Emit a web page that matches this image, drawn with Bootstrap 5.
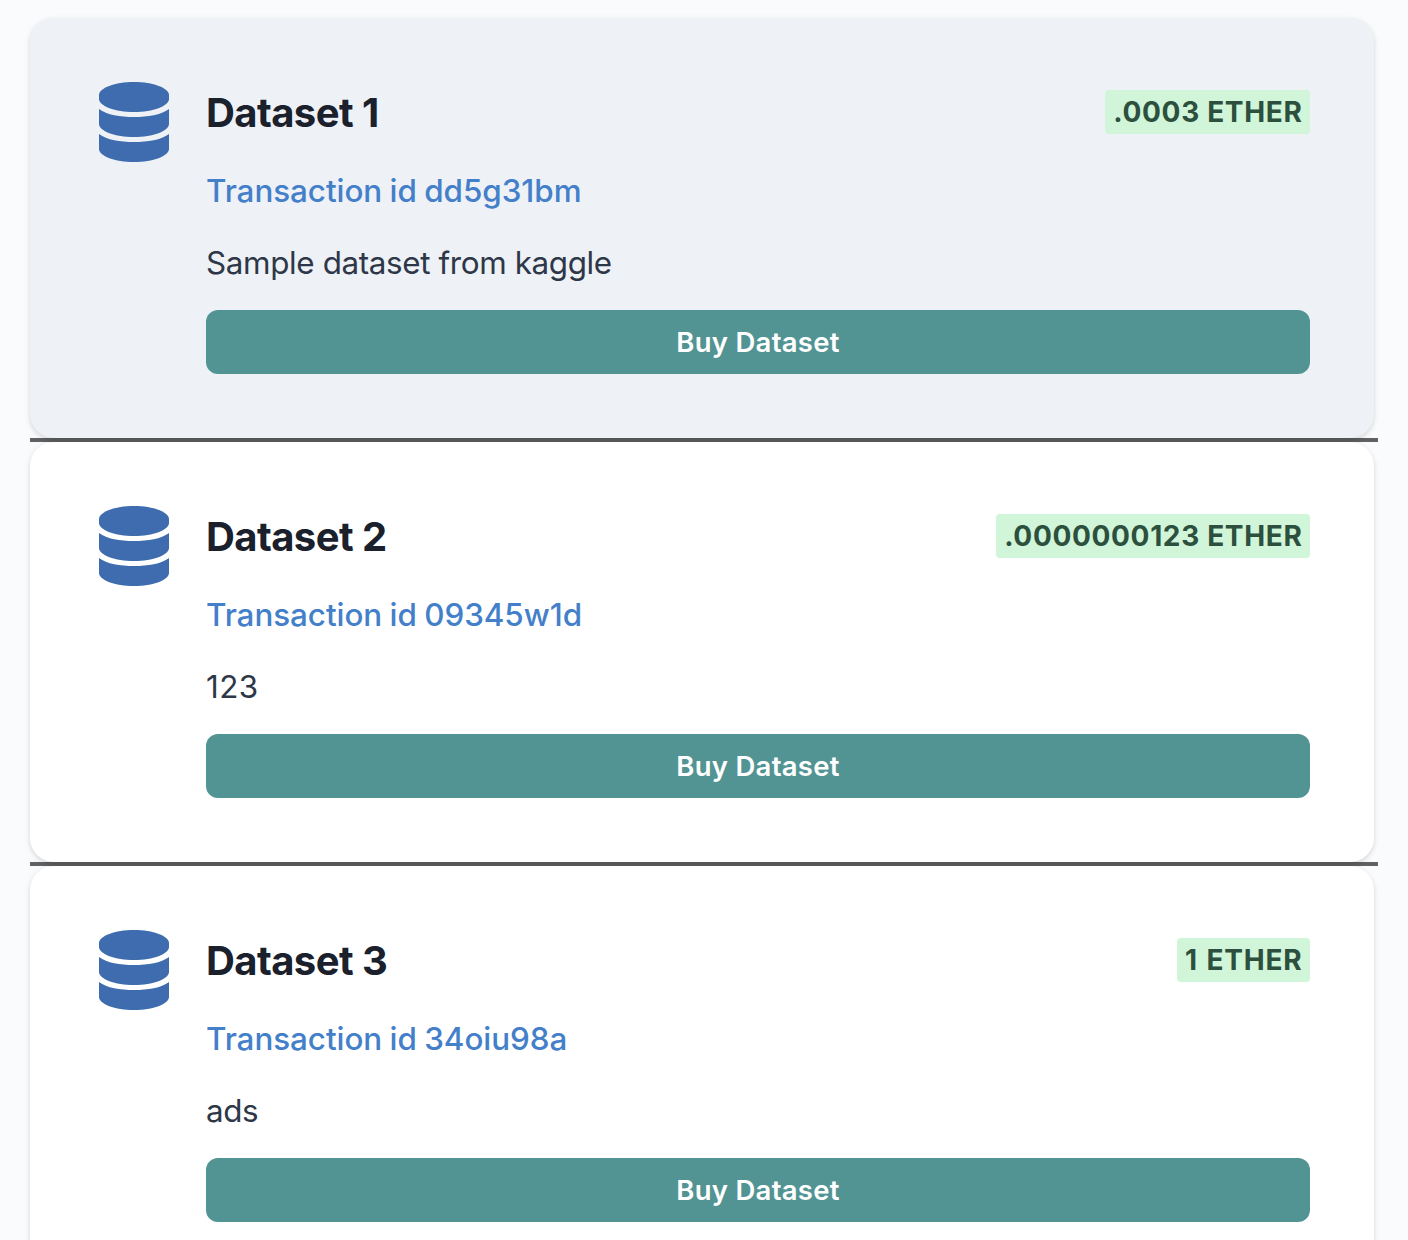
<!DOCTYPE html>
<html lang="en">
<head>
<meta charset="utf-8">
<meta name="viewport" content="width=device-width, initial-scale=1">
<title>Datasets</title>
<link rel="stylesheet" href="https://cdn.jsdelivr.net/npm/bootstrap@5.3.0/dist/css/bootstrap.min.css">
<style>
body{background:#fafbfd;font-family:Inter,"Liberation Sans",sans-serif;overflow:hidden;height:1240px}
.market{padding:18px 30px 0}
.entry{border-bottom:4px solid #5f6163}
.tile{width:1344px;height:420px;padding:64px 64px 0 68px;border-radius:24px;background:#fff;box-shadow:0 2px 6px rgba(0,0,0,.1),0 2px 4px rgba(0,0,0,.06)}
.tile.active{background:#eef1f6}
.db{width:72px;height:80px;margin-right:36px;flex:none;fill:#3e6cae}
.name{height:60px;padding-top:1px;font-size:40px;line-height:60px;font-weight:700;color:#1a202c;letter-spacing:-.58px}
.price{height:44px;line-height:44px;padding:0 7.5px 0 8px;font-size:28px;font-weight:700;letter-spacing:.66px;background:#d0f5d8;color:#2c503d;border-radius:4px}
.price.whole{letter-spacing:.8px;word-spacing:1.2px}
.tx{font-size:31.4px;line-height:48px;font-weight:500;color:#447fca;margin-top:25px;letter-spacing:-.05px;word-spacing:-.9px}
.info{font-size:31.4px;line-height:48px;color:#2d3748;margin-top:24px;letter-spacing:-.37px}
.info.numeric{letter-spacing:.4px}
.buy,.buy:hover{height:64px;margin-top:23px;padding:7px 0 5px;border-radius:12px;background:#519493;color:#fff;font-size:27.5px;font-weight:600;letter-spacing:.27px;border:0}
</style>
</head>
<body>
<svg class="d-none"><symbol id="db" viewBox="0 0 72 80"><path d="M1 13C1 6 17 0 36 0s35 6 35 13v4c0 7-16 13-35 13S1 24 1 17z"/><path d="M1 27c8 6 21 8 35 8s27-2 35-8v15c0 7-16 13-35 13S1 49 1 42z"/><path d="M1 52c8 6 21 8 35 8s27-2 35-8v15c0 7-16 13-35 13S1 74 1 67z"/></symbol></svg>
<main class="market">
<article class="entry"><div class="tile active d-flex"><svg class="db"><use href="#db"/></svg><div class="flex-grow-1"><div class="d-flex justify-content-between align-items-center"><h2 class="name m-0">Dataset 1</h2><span class="price">.0003 ETHER</span></div><p class="tx mb-0">Transaction id dd5g31bm</p><p class="info mb-0">Sample dataset from kaggle</p><button class="btn buy w-100">Buy Dataset</button></div></div></article>
<article class="entry"><div class="tile d-flex"><svg class="db"><use href="#db"/></svg><div class="flex-grow-1"><div class="d-flex justify-content-between align-items-center"><h2 class="name m-0">Dataset 2</h2><span class="price">.0000000123 ETHER</span></div><p class="tx mb-0">Transaction id 09345w1d</p><p class="info numeric mb-0">123</p><button class="btn buy w-100">Buy Dataset</button></div></div></article>
<article class="entry"><div class="tile d-flex"><svg class="db"><use href="#db"/></svg><div class="flex-grow-1"><div class="d-flex justify-content-between align-items-center"><h2 class="name m-0">Dataset 3</h2><span class="price whole">1 ETHER</span></div><p class="tx mb-0">Transaction id 34oiu98a</p><p class="info mb-0">ads</p><button class="btn buy w-100">Buy Dataset</button></div></div></article>
</main>
<script src="https://cdn.jsdelivr.net/npm/bootstrap@5.3.0/dist/js/bootstrap.bundle.min.js"></script>
</body>
</html>
